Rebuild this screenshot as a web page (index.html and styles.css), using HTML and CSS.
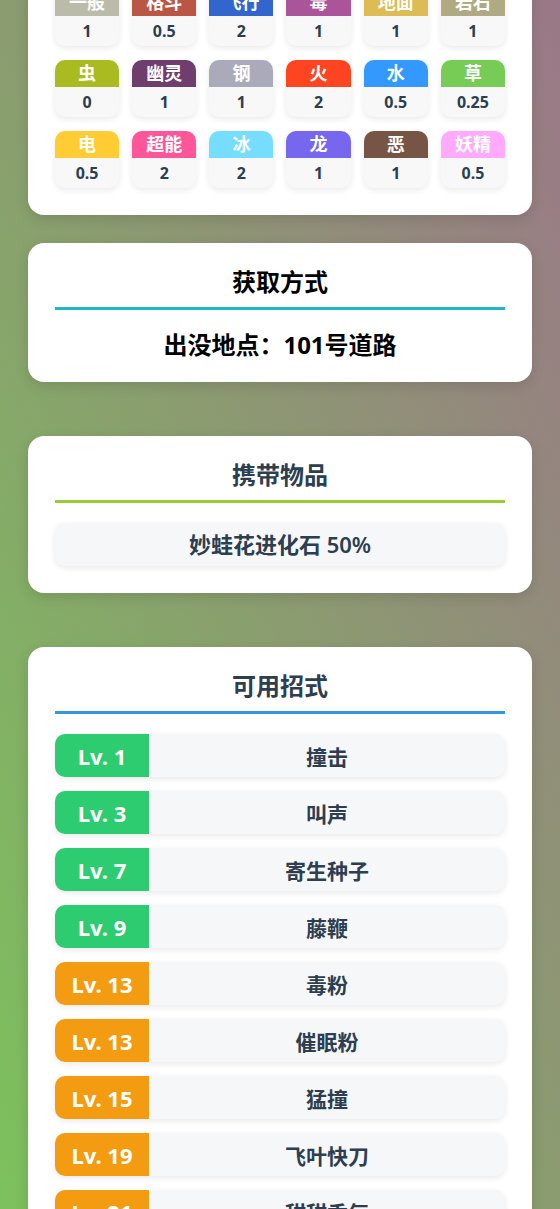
FILE: index.html
```html
<!DOCTYPE html>
<html lang="zh-CN">
<head>
<meta charset="utf-8">
<title>妙蛙种子</title>
<link rel="stylesheet" href="styles.css">
</head>
<body>
<main class="page">
  <section class="card card-types">
    <h3 class="card-title line-red">属性相克</h3>
    <div class="type-grid">
      <div class="type"><div class="type-name t-normal">一般</div><div class="type-val">1</div></div>
      <div class="type"><div class="type-name t-fighting">格斗</div><div class="type-val">0.5</div></div>
      <div class="type"><div class="type-name t-flying">飞行</div><div class="type-val">2</div></div>
      <div class="type"><div class="type-name t-poison">毒</div><div class="type-val">1</div></div>
      <div class="type"><div class="type-name t-ground">地面</div><div class="type-val">1</div></div>
      <div class="type"><div class="type-name t-rock">岩石</div><div class="type-val">1</div></div>
      <div class="type"><div class="type-name t-bug">虫</div><div class="type-val">0</div></div>
      <div class="type"><div class="type-name t-ghost">幽灵</div><div class="type-val">1</div></div>
      <div class="type"><div class="type-name t-steel">钢</div><div class="type-val">1</div></div>
      <div class="type"><div class="type-name t-fire">火</div><div class="type-val">2</div></div>
      <div class="type"><div class="type-name t-water">水</div><div class="type-val">0.5</div></div>
      <div class="type"><div class="type-name t-grass">草</div><div class="type-val">0.25</div></div>
      <div class="type"><div class="type-name t-electric">电</div><div class="type-val">0.5</div></div>
      <div class="type"><div class="type-name t-psychic">超能</div><div class="type-val">2</div></div>
      <div class="type"><div class="type-name t-ice">冰</div><div class="type-val">2</div></div>
      <div class="type"><div class="type-name t-dragon">龙</div><div class="type-val">1</div></div>
      <div class="type"><div class="type-name t-dark">恶</div><div class="type-val">1</div></div>
      <div class="type"><div class="type-name t-fairy">妖精</div><div class="type-val">0.5</div></div>
    </div>
  </section>

  <section class="card card-obtain">
    <h3 class="card-title title-black line-teal">获取方式</h3>
    <p class="obtain-text">出没地点：101号道路</p>
  </section>

  <section class="card card-item">
    <h3 class="card-title line-green">携带物品</h3>
    <div class="item-box">妙蛙花进化石 50%</div>
  </section>

  <section class="card card-moves">
    <h3 class="card-title line-blue">可用招式</h3>
    <ul class="move-list">
      <li class="move"><span class="lv lv-early">Lv. 1</span><span class="move-name">撞击</span></li>
      <li class="move"><span class="lv lv-early">Lv. 3</span><span class="move-name">叫声</span></li>
      <li class="move"><span class="lv lv-early">Lv. 7</span><span class="move-name">寄生种子</span></li>
      <li class="move"><span class="lv lv-early">Lv. 9</span><span class="move-name">藤鞭</span></li>
      <li class="move"><span class="lv lv-mid">Lv. 13</span><span class="move-name">毒粉</span></li>
      <li class="move"><span class="lv lv-mid">Lv. 13</span><span class="move-name">催眠粉</span></li>
      <li class="move"><span class="lv lv-mid">Lv. 15</span><span class="move-name">猛撞</span></li>
      <li class="move"><span class="lv lv-mid">Lv. 19</span><span class="move-name">飞叶快刀</span></li>
      <li class="move"><span class="lv lv-mid">Lv. 21</span><span class="move-name">甜甜香气</span></li>
      <li class="move"><span class="lv lv-mid">Lv. 25</span><span class="move-name">种子炸弹</span></li>
    </ul>
  </section>
</main>
</body>
</html>
```

FILE: styles.css
```css
html {
  height: 100%;
  overflow: hidden;
  background: linear-gradient(to top right, #7cc15c 0%, #8b9c70 50%, #9b7888 100%);
}

body {
  margin: 0;
  height: 100%;
  overflow: hidden;
  font-family: "Noto Sans", "Noto Sans CJK SC", sans-serif;
  color: #2c3e50;
}

.page {
  display: flex;
  flex-direction: column;
  padding: 0 28px;
  margin-top: -98px;
}

.card {
  background: #ffffff;
  border-radius: 16px;
  padding: 25px 27px 27px;
  box-shadow: 0 4px 14px rgba(0, 0, 0, 0.12);
}

.card-types { margin-bottom: 28px; }
.card-obtain { margin-bottom: 54px; padding-bottom: 23px; }
.card-item { margin-bottom: 54px; }

.card-title {
  margin: 0 0 20px;
  padding-bottom: 11px;
  font-size: 24px;
  line-height: 28px;
  font-weight: 700;
  text-align: center;
  color: #2c3e50;
  border-bottom: 3px solid #3498db;
}

.title-black { color: #000; }
.line-red { border-color: #e74c3c; }
.line-teal { border-color: #1fb6c9; }
.line-green { border-color: #9acd32; }
.line-blue { border-color: #3498db; }

/* type chart */
.type-grid {
  display: grid;
  grid-template-columns: repeat(6, 1fr);
  column-gap: 13px;
  row-gap: 14px;
}

.type {
  border-radius: 10px;
  overflow: hidden;
  background: #f8f8f8;
  box-shadow: 0 2px 6px rgba(0, 0, 0, 0.09);
  text-align: center;
}

.type-name {
  height: 27px;
  line-height: 27px;
  font-size: 18px;
  font-weight: 700;
  color: #fff;
}

.type-val {
  height: 30px;
  line-height: 30px;
  font-size: 16px;
  font-weight: 700;
  color: #2c3e50;
}

.t-normal { background: #bbbbaa; }
.t-fighting { background: #bb5544; }
.t-flying { background: #3366cc; }
.t-poison { background: #aa5599; }
.t-ground { background: #ddbb55; }
.t-rock { background: #b0aa82; }
.t-bug { background: #aabb22; }
.t-ghost { background: #6f3e6f; }
.t-steel { background: #aaaabb; }
.t-fire { background: #ff4422; }
.t-water { background: #3399ff; }
.t-grass { background: #77cc55; }
.t-electric { background: #ffcc33; }
.t-psychic { background: #ff5599; }
.t-ice { background: #77ddff; }
.t-dragon { background: #7766ee; }
.t-dark { background: #775544; }
.t-fairy { background: #ffaaff; }

/* obtain */
.obtain-text {
  margin: 0;
  font-size: 24px;
  line-height: 29px;
  font-weight: 700;
  text-align: center;
  color: #000;
}

/* held item */
.item-box {
  height: 43px;
  line-height: 43px;
  border-radius: 10px;
  background: #f6f7f9;
  box-shadow: 0 2px 6px rgba(0, 0, 0, 0.09);
  text-align: center;
  font-size: 22px;
  font-weight: 600;
  color: #2c3e50;
}

/* moves */
.move-list {
  list-style: none;
  margin: 0;
  padding: 0;
  display: flex;
  flex-direction: column;
  gap: 14px;
}

.move {
  display: flex;
  height: 43px;
  border-radius: 10px;
  overflow: hidden;
  background: #f6f7f9;
  box-shadow: 0 2px 6px rgba(0, 0, 0, 0.09);
}

.lv {
  flex: 0 0 94px;
  display: flex;
  align-items: center;
  justify-content: center;
  font-size: 22px;
  font-weight: 700;
  color: #fff;
}

.lv-early { background: #2ecc71; }
.lv-mid { background: #f39c12; }

.move-name {
  flex: 1;
  display: flex;
  align-items: center;
  justify-content: center;
  font-size: 21px;
  font-weight: 700;
  color: #2c3e50;
}
```
